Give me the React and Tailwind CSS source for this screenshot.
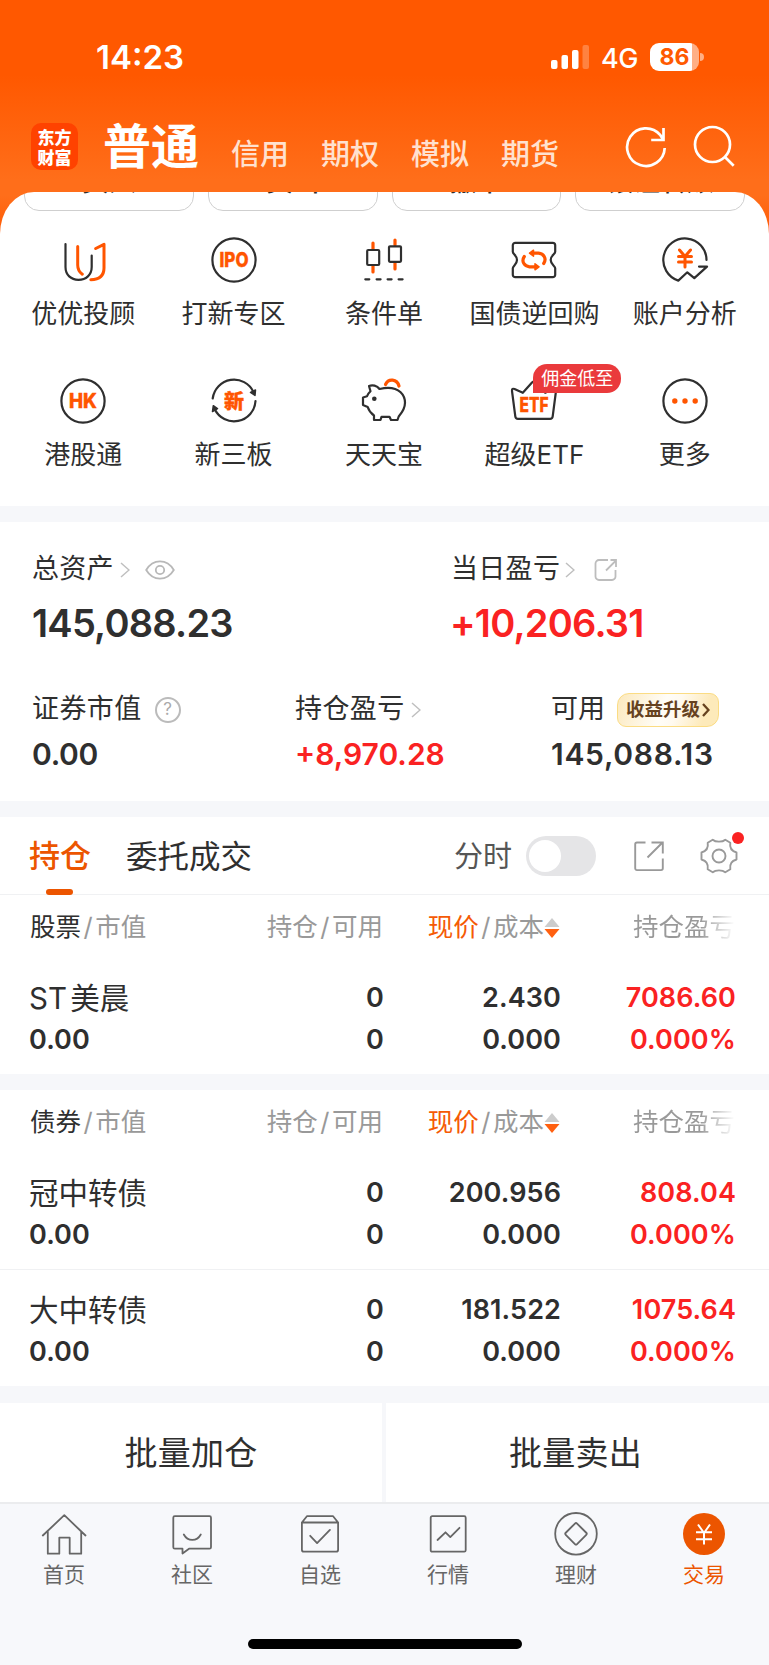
import clsx from "clsx";

const accountTabs = ["信用", "期权", "模拟", "期货"];

const quickButtons = ["买入", "卖出", "撤单", "银证转账"];

const shortcuts = [
  { label: "优优投顾", icon: <AdvisorIcon /> },
  { label: "打新专区", icon: <IpoIcon /> },
  { label: "条件单", icon: <ConditionIcon /> },
  { label: "国债逆回购", icon: <BondIcon /> },
  { label: "账户分析", icon: <AnalysisIcon /> },
  { label: "港股通", icon: <HkIcon /> },
  { label: "新三板", icon: <NewBoardIcon /> },
  { label: "天天宝", icon: <PiggyIcon /> },
  { label: "超级ETF", icon: <EtfIcon />, badge: "佣金低至" },
  { label: "更多", icon: <MoreIcon /> },
];

const groups = [
  {
    type: "股票",
    rows: [{ name: "ST 美晨", price: "2.430", profit: "7086.60" }],
  },
  {
    type: "债券",
    rows: [
      { name: "冠中转债", price: "200.956", profit: "808.04" },
      { name: "大中转债", price: "181.522", profit: "1075.64" },
    ],
  },
];

const navItems = [
  { label: "首页", icon: <HomeIcon /> },
  { label: "社区", icon: <CommunityIcon /> },
  { label: "自选", icon: <WatchlistIcon /> },
  { label: "行情", icon: <MarketIcon /> },
  { label: "理财", icon: <WealthIcon /> },
  { label: "交易", icon: <TradeIcon />, active: true },
];

function Icon({ children, className = "size-12" }) {
  return (
    <svg
      viewBox="0 0 48 48"
      className={clsx("shrink-0", className)}
      fill="none"
      stroke="#2f2f2f"
      strokeWidth="2.2"
      strokeLinecap="round"
      strokeLinejoin="round"
    >
      {children}
    </svg>
  );
}

function IconText({ y, size = 20, width, children }) {
  return (
    <text
      x="24"
      y={y}
      fontSize={size}
      fontWeight="800"
      textAnchor="middle"
      textLength={width}
      lengthAdjust="spacingAndGlyphs"
      fill="#ff5500"
      stroke="#ff5500"
      strokeWidth="0.4"
    >
      {children}
    </text>
  );
}

function AdvisorIcon() {
  return (
    <Icon>
      <path d="M6.500 8v23c0 8 5.500 12.800 13 12.800s13.200-5 13.200-12.800V19.500" />
      <path d="M18.700 10.500V29c0 4 1.500 7 4.600 9.200M36.700 12.500 45 8.300V32c0 7.500-5 11.500-13.200 11.800" stroke="#ff5500" strokeWidth="3" />
    </Icon>
  );
}

function IpoIcon() {
  return (
    <Icon>
      <circle cx="24" cy="24" r="21.600" />
      <IconText y="31" width="29">IPO</IconText>
    </Icon>
  );
}

function ConditionIcon() {
  return (
    <Icon>
      <path d="M13 7v6M13 30v6M35 4v5M35 27v6" stroke="#ff5500" strokeWidth="3.200" />
      <rect x="7.200" y="14" width="12" height="15" rx="1" />
      <rect x="29" y="10.300" width="12" height="15.500" rx="1" />
      <path d="M5.300 43.300h4M16.600 43.300h4M27.600 43.300h4M38.600 43.300h4" />
    </Icon>
  );
}

function BondIcon() {
  return (
    <Icon>
      <path d="M5.300 6.800h37.400a2.500 2.500 0 0 1 2.500 2.500v6.500c0 2.500-4.500 3.500-4.500 8.200s4.500 5.700 4.500 8.200v6.500a2.500 2.500 0 0 1-2.500 2.500H5.300a2.500 2.500 0 0 1-2.500-2.500v-6.500C2.800 29.700 7 28.700 7 24s-4.200-5.700-4.200-8.200V9.300a2.500 2.500 0 0 1 2.500-2.500Z" />
      <g stroke="#ff5500" strokeWidth="3.200">
        <path d="M14.300 20.500c-3.300 5 0 9.800 5.200 10.300H25M33.700 27.500c3.300-5 0-9.800-5.200-10.300H23" />
        <path d="M23.500 14.200v6l-4-3ZM25 27.800v6l4-3Z" fill="#ff5500" strokeWidth="1.500" />
      </g>
    </Icon>
  );
}

function AnalysisIcon() {
  return (
    <Icon>
      <path d="M45.500 24A21.600 21.600 0 1 0 17.300 44.600l9-8.300 7 5.800L46 30.600h-8" />
      <path d="m18.500 14 5.500 6.500 5.500-6.500M17.500 20.500h13M17.500 26h13M24 20.500V31" stroke="#ff5500" strokeWidth="3" />
    </Icon>
  );
}

function HkIcon() {
  return (
    <Icon>
      <circle cx="24" cy="24" r="21.600" />
      <IconText y="31" width="28">HK</IconText>
    </Icon>
  );
}

function NewBoardIcon() {
  return (
    <Icon>
      <path d="M2.700 21.500A21.500 21.500 0 0 1 43.500 15M45.500 24A21.500 21.500 0 0 1 4.600 32" />
      <path d="m40.500 15.500 5-2.500-.5 5.500ZM7.500 31.500l-5 3 .8-5.800Z" fill="#2f2f2f" strokeWidth="1.500" />
      <IconText y="31.500" size={20}>新</IconText>
    </Icon>
  );
}

function PiggyIcon() {
  return (
    <Icon>
      <path d="M9 9c3.500-1.500 8-.5 10.500 3 2.500-.6 5-1.200 8.500-1.200 11 0 17 7 17 15 0 6-3.500 10.500-6.300 13.700L37.500 43H31l-1.500-3.200h-8L20.500 43H14v-4.500c-3-2-5-4.500-6.300-8.500L3 28v-7.500l4-1.200c.6-2 1.600-3.300 3.500-5Z" />
      <circle cx="14.300" cy="21.700" r="2.300" fill="#2f2f2f" stroke="none" />
      <path d="M25.500 7.500c3-6.500 11.500-5.500 13.500 1.500" stroke="#ff5500" strokeWidth="3.200" />
    </Icon>
  );
}

function EtfIcon() {
  return (
    <Icon>
      <path d="M2 14c-.2-2 .8-2.700 2.500-2l8.300 3.800L22 5.500c1.500-1.600 2.500-1.600 4 0l9.200 10.300 8.300-3.800c1.700-.7 2.700 0 2.500 2l-3.300 25.300c-.2 1.600-1 2.500-2.700 2.500H8c-1.700 0-2.500-.9-2.700-2.500Z" />
      <IconText y="35" width="29">ETF</IconText>
    </Icon>
  );
}

function MoreIcon() {
  return (
    <Icon>
      <circle cx="24" cy="24" r="21.600" />
      <g fill="#ff5500" stroke="none">
        <circle cx="13.800" cy="24" r="2.700" />
        <circle cx="24" cy="24" r="2.700" />
        <circle cx="34.200" cy="24" r="2.700" />
      </g>
    </Icon>
  );
}

function NavIcon({ children }) {
  return (
    <svg viewBox="0 0 48 48" className="size-12" fill="none" stroke="#666" strokeWidth="1.800" strokeLinecap="round" strokeLinejoin="round">
      {children}
    </svg>
  );
}

function HomeIcon() {
  return (
    <NavIcon>
      <path d="m2.800 25.500 21.500-20.300 21.200 20.300M7.800 21.500v22.200h11.500v-16h10.400v16h11.500V21.500" />
    </NavIcon>
  );
}

function CommunityIcon() {
  return (
    <NavIcon>
      <path d="M6.800 6.200h34.700a1.500 1.500 0 0 1 1.500 1.500v29.500a1.500 1.500 0 0 1-1.500 1.500H21l-6.500 4.800v-4.800H6.800a1.500 1.500 0 0 1-1.500-1.500V7.700a1.500 1.500 0 0 1 1.500-1.500Z" />
      <path d="M15.800 24.500c4 7.200 13 7.200 17 0" />
    </NavIcon>
  );
}

function WatchlistIcon() {
  return (
    <NavIcon>
      <path d="M5.900 12.500h36.200v27.200a2 2 0 0 1-2 2H7.900a2 2 0 0 1-2-2Zm0 0 5-6.300h26.200l5 6.300M14.200 25.800l6.900 7.300 12.800-13.200" />
    </NavIcon>
  );
}

function MarketIcon() {
  return (
    <NavIcon>
      <rect x="6.700" y="6.200" width="35" height="35.500" rx="1.500" />
      <path d="m13.500 30 8-7.700 4.800 4.800 9.200-9.300" />
    </NavIcon>
  );
}

function WealthIcon() {
  return (
    <NavIcon>
      <circle cx="24" cy="23.800" r="20.800" />
      <rect x="16" y="15.800" width="16" height="16" rx="1.500" transform="rotate(45 24 23.800)" />
    </NavIcon>
  );
}

function TradeIcon() {
  return (
    <NavIcon>
      <circle cx="24" cy="24" r="21" fill="#ec5500" stroke="none" />
      <path d="m18 14.500 6 8.500 6-8.500M16 22.300h16M16 29.300h16M24 23v11.500" stroke="#fff" strokeWidth="2" strokeLinecap="butt" />
    </NavIcon>
  );
}

function Chevron({ className }) {
  return (
    <svg viewBox="0 0 10 16" className={clsx("h-4 w-2.5 shrink-0", className)} fill="none" stroke="#bfbfbf" strokeWidth="1.500">
      <path d="m1 1 8 7-8 7" />
    </svg>
  );
}

function StatusBar() {
  return (
    <div className="flex h-[114px] items-center pl-[96px] pr-[65px] text-white">
      <span className="pt-px text-[33px] font-semibold leading-none">14:23</span>
      <svg viewBox="0 0 38 24" className="ml-auto h-6 w-[38px]" fill="#fff">
        <rect y="15" width="6.500" height="9" rx="2" />
        <rect x="10.500" y="10" width="6.500" height="14" rx="2" />
        <rect x="21" y="5" width="6.500" height="19" rx="2" />
        <rect x="31.500" width="6.500" height="24" rx="2" opacity=".25" />
      </svg>
      <span className="ml-3 w-[37px] pt-[2px] text-[27px] font-medium leading-none tracking-[-0.5px]">4G</span>
      <div className="ml-[12px] flex h-7 w-[49px] items-center justify-center rounded-[9px] bg-[linear-gradient(90deg,#fff_86%,#ffaf85_86%)] text-[23px] font-bold leading-none text-[#ff5a00]">
        86
      </div>
      <span className="ml-px h-2 w-[4px] rounded-r-full bg-[#ffaf85]" />
    </div>
  );
}

function Header() {
  return (
    <header className="h-[240px] bg-[linear-gradient(180deg,#ff5800_0px,#ff5800_75px,#ff6e1a_180px,#ff6e1a_196px,#ff5800_240px)]">
      <StatusBar />
      <div className="flex h-[78px] pl-[31px]">
        <div className="mt-[9px] size-[47px] rounded-[10px] bg-[#ff4200] pt-[4px] text-center font-['Noto_Sans_CJK_SC'] text-[17px] font-black leading-[19.500px] text-white">
          东方
          <br />
          财富
        </div>
        <h1 className="ml-[25px] pt-[2px] text-[48px] font-bold leading-[62px] text-white">普通</h1>
        <div className="ml-[32px] flex gap-[32px] pt-[21px] text-[29px] font-medium leading-[40px] text-[#ffe1cf]">
          {accountTabs.map((tab) => (
            <span key={tab} className="w-[58px] whitespace-nowrap">{tab}</span>
          ))}
        </div>
        <svg viewBox="0 0 42 42" className="ml-[66px] mt-[12px] size-[42px]" fill="none" stroke="#fff" strokeWidth="2.700">
          <path d="M39.700 22a18.800 18.800 0 1 1-4.600-13.200l3 4.700M38.500 2v12H26.200" />
        </svg>
        <svg viewBox="0 0 42 42" className="ml-[26px] mt-[11px] size-[42px]" fill="none" stroke="#fff" strokeWidth="2.700">
          <circle cx="19.500" cy="19.500" r="17.500" />
          <path d="m31.700 31.700 9 9" />
        </svg>
      </div>
    </header>
  );
}

function Shortcuts() {
  return (
    <section className="-mt-12 h-[314px] overflow-hidden rounded-tl-[34px_42px] rounded-tr-[34px_42px] bg-white">
      <div className="-mt-[41px] flex gap-[14px] px-6">
        {quickButtons.map((label) => (
          <button key={label} className="h-[60px] flex-1 rounded-[15px] border border-[#cfcfcf] text-[27px] font-medium leading-none">
            {label}
          </button>
        ))}
      </div>
      <div className="grid grid-cols-5 pl-2 pr-[9px] pt-[25px]">
        {shortcuts.map(({ label, icon, badge }) => (
          <div key={label} className="relative flex h-[141px] flex-col items-center">
            {icon}
            {badge && (
              <span className="absolute left-[74px] top-[-13px] flex h-[29px] w-[88px] items-center justify-center rounded-[14px] rounded-bl-none bg-[#ea3a3c] text-[18px] leading-none text-white">
                {badge}
              </span>
            )}
            <span className="mt-[12px] whitespace-nowrap text-[26px] leading-[36px]">{label}</span>
          </div>
        ))}
      </div>
    </section>
  );
}

function Assets() {
  return (
    <section className="h-[279px] bg-white pt-[29.500px]">
      <div className="flex pl-8">
        <div className="w-[419px]">
          <div className="flex h-9 items-center">
            <span className="text-[27px] tracking-[0.3px]">总资产</span>
            <Chevron className="ml-[6px]" />
            <svg viewBox="0 0 30 20" className="ml-[15px] h-5 w-[30px]" fill="none" stroke="#b8b8b8" strokeWidth="1.800">
              <path d="M1.200 10C8-1.500 22-1.500 28.800 10 22 21.500 8 21.500 1.200 10Z" />
              <circle cx="15" cy="10" r="4.200" />
            </svg>
          </div>
          <div className="mt-[13px] text-[38px] font-semibold leading-[44px] tracking-[-0.75px]">145,088.23</div>
        </div>
        <div>
          <div className="flex h-9 items-center">
            <span className="text-[27px] tracking-[0.3px]">当日盈亏</span>
            <Chevron className="ml-[5px]" />
            <svg viewBox="0 0 24 24" className="ml-[19px] size-6" fill="none" stroke="#bdbdbd" strokeWidth="1.800">
              <path d="M14 2H5a3.500 3.500 0 0 0-3.500 3.500v13A3.500 3.500 0 0 0 5 22h13a3.500 3.500 0 0 0 3.500-3.500V12M12 12.500 22 2.500M16.500 2H22v7" />
            </svg>
          </div>
          <div className="-ml-px mt-[13px] text-[38px] font-semibold leading-[44px] tracking-[-0.75px] text-[#fa2222]">+10,206.31</div>
        </div>
      </div>
      <div className="mt-[47px] flex pl-8">
        <div className="w-[263px]">
          <div className="flex h-9 items-center">
            <span className="text-[27px] tracking-[0.4px]">证券市值</span>
            <span className="ml-[13px] grid size-[26px] place-content-center rounded-full border-2 border-[#bbb] text-[17px] leading-none text-[#aaa]">?</span>
          </div>
          <div className="mt-[8px] text-[30px] font-semibold leading-9 tracking-[-0.3px]">0.00</div>
        </div>
        <div className="w-[256px]">
          <div className="flex h-9 items-center">
            <span className="text-[27px] tracking-[0.4px]">持仓盈亏</span>
            <Chevron className="ml-[6px]" />
          </div>
          <div className="mt-[8px] text-[30px] font-semibold leading-9 text-[#fa2222]">+8,970.28</div>
        </div>
        <div>
          <div className="flex h-9 items-center">
            <span className="text-[27px]">可用</span>
            <span className="ml-[12px] flex h-[34px] w-[102px] items-center justify-center rounded-[9px] rounded-tl-[12px] rounded-br-[12px] border border-[#fbdc83] bg-[linear-gradient(110deg,#fcebc3_5%,#fffdf8_45%,#fffaf0_58%,#fdeaba_85%)] text-[18.500px] font-bold leading-none text-[#66421f]">
              收益升级
              <svg viewBox="0 0 8 14" className="ml-0.5 h-[14px] w-2" fill="none" stroke="#66421f" strokeWidth="2.300">
                <path d="m1 1 5.500 6L1 13" />
              </svg>
            </span>
          </div>
          <div className="mt-[8px] text-[30px] font-semibold leading-9 tracking-[0.7px]">145,088.13</div>
        </div>
      </div>
    </section>
  );
}

function PositionTabs() {
  return (
    <div className="flex h-[78px] items-center border-b border-[#f0f1f3] bg-white pl-[29px]">
      <div className="relative flex h-full items-center pt-[2px] text-[31px] font-medium text-[#ec5500]">
        持仓
        <span className="absolute -bottom-px left-[17px] h-[6px] w-[27px] rounded-[3px] bg-[#ec5500]" />
      </div>
      <span className="ml-[35px] pt-[2px] text-[31.500px]">委托成交</span>
      <span className="ml-auto pt-[2px] text-[29px] text-[#555]">分时</span>
      <span className="ml-[14px] flex h-10 w-[70px] items-center rounded-full bg-[#e5e5e7] pl-[3px]">
        <span className="size-8 rounded-full bg-white" />
      </span>
      <svg viewBox="0 0 32 32" className="ml-[37px] size-8" fill="none" stroke="#999" strokeWidth="1.900">
        <path d="M12.500 2.500H4A1.800 1.800 0 0 0 2.200 4.300v24A1.800 1.800 0 0 0 4 30.100h24a1.800 1.800 0 0 0 1.800-1.800V18.500M14.500 17.500l15-15M18.500 2.500h11.300v11" />
      </svg>
      <span className="relative ml-[35px] mr-[31px]">
        <svg viewBox="0 0 38 38" className="size-[38px]" fill="none" stroke="#999" strokeWidth="1.900" strokeLinejoin="round">
          <path d="M12.700 2.700c2.800 2.600 9.800 2.600 12.600 0l5 3c-.8 4.800 1.500 8.500 6.200 9.800v7c-4.700 1.300-7 5-6.200 9.800l-5 3c-2.800-2.600-9.800-2.600-12.600 0l-5-3c.8-4.800-1.500-8.500-6.200-9.800v-7c4.700-1.300 7-5 6.200-9.800Z" />
          <circle cx="19" cy="19" r="6.500" />
        </svg>
        <span className="absolute right-[-6px] top-[-5px] size-3 rounded-full bg-[#fa2222]" />
      </span>
    </div>
  );
}

function SortIcon() {
  return (
    <svg viewBox="0 0 16 22" className="h-[22px] w-4">
      <path d="M8 1 15.500 10H.5Z" fill="#ccc" />
      <path d="M.5 12h15L8 21Z" fill="#ff6010" />
    </svg>
  );
}

function Cell({ top, bottom, className, topClassName }) {
  return (
    <div className={clsx("text-[27px] font-semibold leading-[42px] tracking-[0.1px]", className)}>
      <div className={clsx("h-[42px]", topClassName)}>{top}</div>
      <div className="h-[42px]">{bottom}</div>
    </div>
  );
}

function PositionGroup({ type, rows }) {
  return (
    <section className="bg-white">
      <div className="grid h-[63px] grid-cols-[353px_177px_175px] items-center pl-[30px] pt-[2px] text-[25.500px] text-[#999]">
        <div className="flex items-center justify-between">
          <span>
            <span className="text-[#2f2f2f]">{type}</span>
            <span className="px-[2.500px]">/</span>市值
          </span>
          <span>持仓<span className="px-[2.500px]">/</span>可用</span>
        </div>
        <div className="flex items-center justify-end">
          <span className="text-[#f55a05]">现价</span>
          <span className="px-[2.500px]">/</span>成本
          <SortIcon />
        </div>
        <span className="bg-[linear-gradient(90deg,#999_80%,#fff_100%)] bg-clip-text text-right text-transparent">持仓盈亏</span>
      </div>
      {rows.map(({ name, price, profit }, idx) => (
        <div
          key={name}
          className={clsx(
            "grid grid-cols-[200px_154px_177px_175px] pl-[30px]",
            idx === 0 ? "h-[116px] pt-[19px]" : "h-[117px] border-t border-[#f0f1f3] pt-[19px]"
          )}
        >
          <Cell top={name} bottom="0.00" topClassName="text-[29.500px] font-normal tracking-normal [word-spacing:-5px]" className="-ml-px" />
          <Cell top="0" bottom="0" className="text-right" />
          <Cell top={price} bottom="0.000" className="text-right" />
          <Cell top={profit} bottom="0.000%" className="text-right text-[#fa2222]" />
        </div>
      ))}
    </section>
  );
}

function BottomNav() {
  return (
    <nav className="h-[163px] border-t-2 border-[#ebecee] bg-[#f7f8fb]">
      <div className="grid w-[768px] grid-cols-6 pt-[6px]">
        {navItems.map(({ label, icon, active }) => (
          <div key={label} className="flex flex-col items-center">
            {icon}
            <span className={clsx("mt-0.5 text-[21px] leading-[30px]", active ? "text-[#ec5500]" : "text-[#666]")}>{label}</span>
          </div>
        ))}
      </div>
      <div className="mx-auto mt-[49px] h-[10px] w-[274px] rounded-full bg-black" />
    </nav>
  );
}

export default function App() {
  return (
    <div className="h-[1665px] w-[769px] overflow-hidden bg-[#f6f7fa] font-['Inter','Noto_Sans_CJK_SC',sans-serif] text-[#2f2f2f]">
      <Header />
      <Shortcuts />
      <div className="h-4" />
      <Assets />
      <div className="h-4" />
      <PositionTabs />
      <div className="flex flex-col gap-4">
        {groups.map((group) => (
          <PositionGroup key={group.type} {...group} />
        ))}
      </div>
      <div className="mt-[17px] grid h-[99px] grid-cols-[382px_1fr] gap-1 text-[33px] tracking-[0.3px]">
        <button className="bg-white pt-[3px]">批量加仓</button>
        <button className="bg-white pr-1 pt-[3px]">批量卖出</button>
      </div>
      <BottomNav />
    </div>
  );
}
